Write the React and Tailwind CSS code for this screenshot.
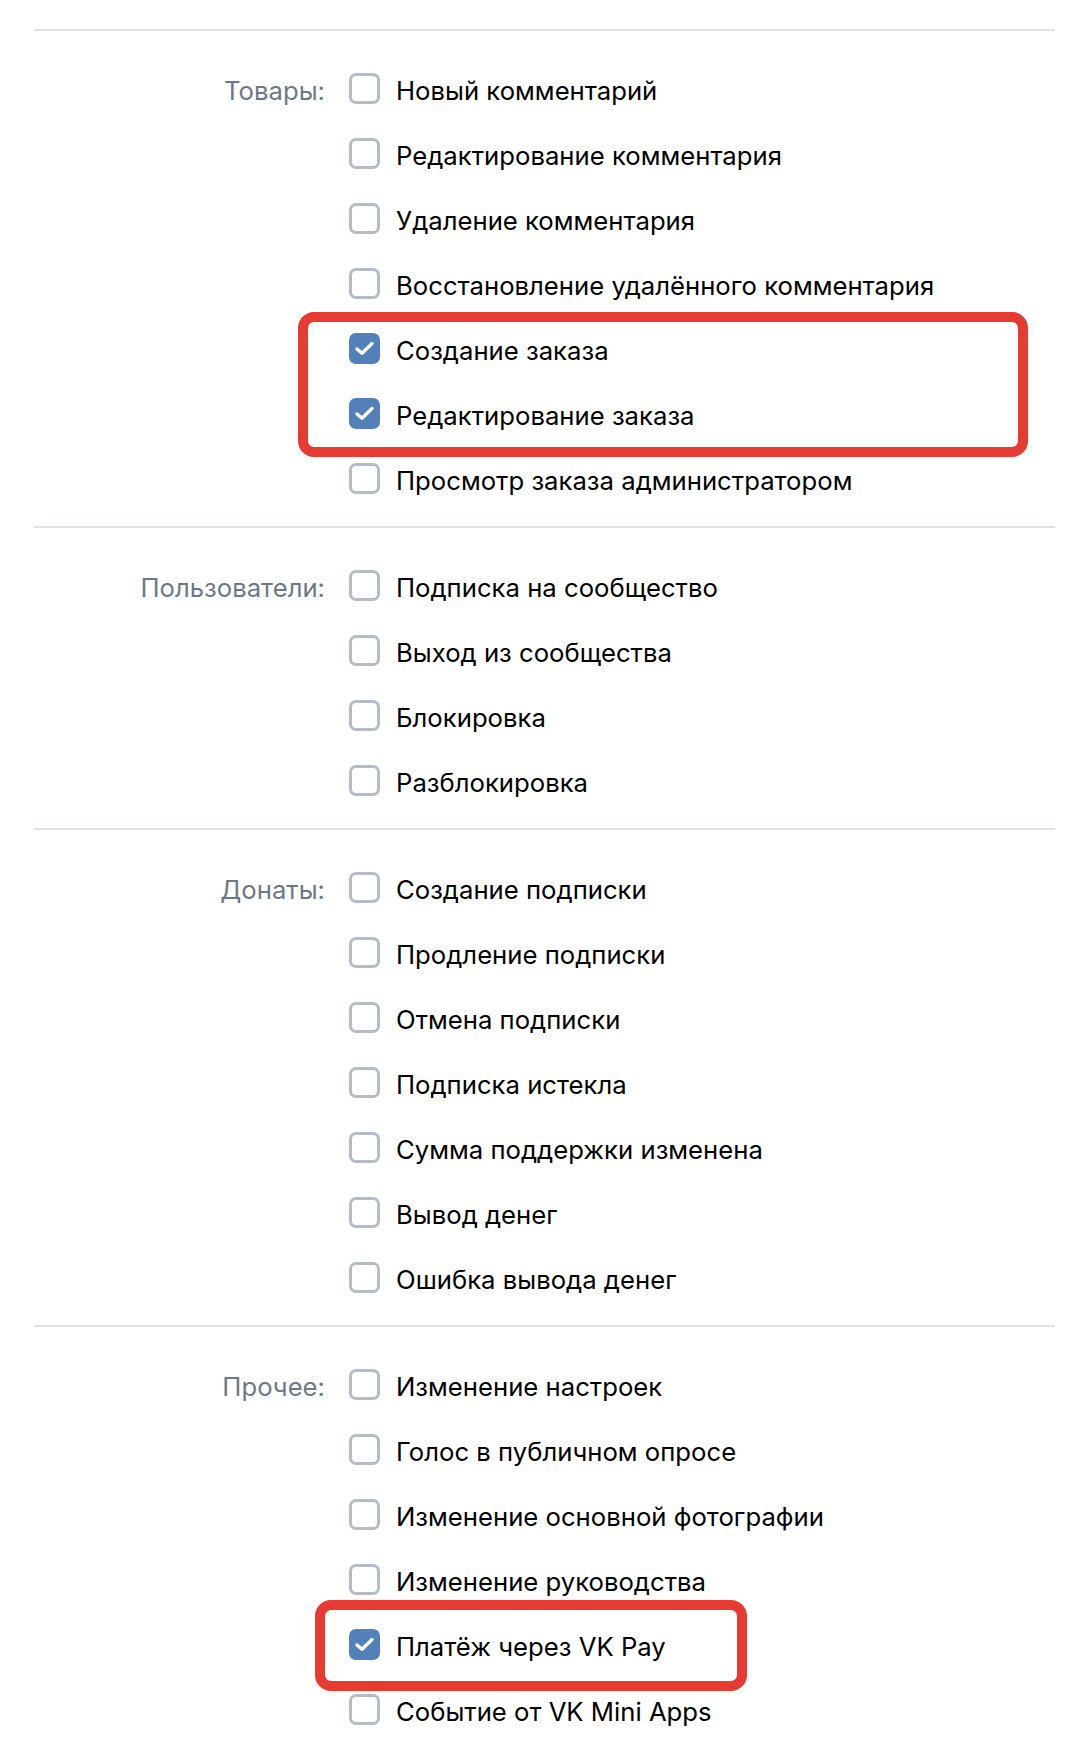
import React from "react";

const sections = [
  {
    label: "Товары:",
    items: [
      ["Новый комментарий", false],
      ["Редактирование комментария", false],
      ["Удаление комментария", false],
      ["Восстановление удалённого комментария", false],
      ["Создание заказа", true],
      ["Редактирование заказа", true],
      ["Просмотр заказа администратором", false],
    ],
  },
  {
    label: "Пользователи:",
    items: [
      ["Подписка на сообщество", false],
      ["Выход из сообщества", false],
      ["Блокировка", false],
      ["Разблокировка", false],
    ],
  },
  {
    label: "Донаты:",
    items: [
      ["Создание подписки", false],
      ["Продление подписки", false],
      ["Отмена подписки", false],
      ["Подписка истекла", false],
      ["Сумма поддержки изменена", false],
      ["Вывод денег", false],
      ["Ошибка вывода денег", false],
    ],
  },
  {
    label: "Прочее:",
    items: [
      ["Изменение настроек", false],
      ["Голос в публичном опросе", false],
      ["Изменение основной фотографии", false],
      ["Изменение руководства", false],
      ["Платёж через VK Pay", true],
      ["Событие от VK Mini Apps", false],
    ],
  },
];

function Box({ checked }) {
  if (checked) {
    return (
      <div className="w-[31px] h-[31px] shrink-0 rounded-[7px] bg-[#5181b8] flex items-center justify-center">
        <svg width="21" height="17" viewBox="0 0 21 17" fill="none">
          <path d="M3 9 L8 13.3 L18 3.5" stroke="#fff" strokeWidth="3.4" strokeLinecap="round" strokeLinejoin="round" />
        </svg>
      </div>
    );
  }
  return <div className="w-[31px] h-[31px] shrink-0 rounded-[7px] border-[3px] border-[#b3bcc7] bg-white" />;
}

export default function App() {
  return (
    <div
      className="relative w-[1086px] h-[1758px] bg-white overflow-hidden pt-[29px] pl-[34px] pr-[31px]"
      style={{ fontFamily: "Inter, 'Noto Sans', sans-serif" }}
    >
      {sections.map((s) => (
        <div key={s.label} className="border-t-2 border-[#dce1e6] pt-[42px] pb-[32px] flex">
          <div className="w-[291px] shrink-0 text-right text-[25.7px] leading-[31px] text-[#6d7885] pt-[2px]">
            {s.label}
          </div>
          <div className="ml-[24px] flex flex-col gap-[34px]">
            {s.items.map(([t, c]) => (
              <div key={t} className="flex items-center h-[31px]">
                <Box checked={c} />
                <span className="ml-[16px] text-[25.7px] leading-[31px] text-black pt-[3px] whitespace-nowrap">{t}</span>
              </div>
            ))}
          </div>
        </div>
      ))}

      <div className="absolute left-[298px] top-[312px] w-[730px] h-[145px] border-[10px] border-[#e53b33] rounded-[16px] pointer-events-none" />
      <div className="absolute left-[315px] top-[1600px] w-[432px] h-[91px] border-[10px] border-[#e53b33] rounded-[16px] pointer-events-none" />
    </div>
  );
}
